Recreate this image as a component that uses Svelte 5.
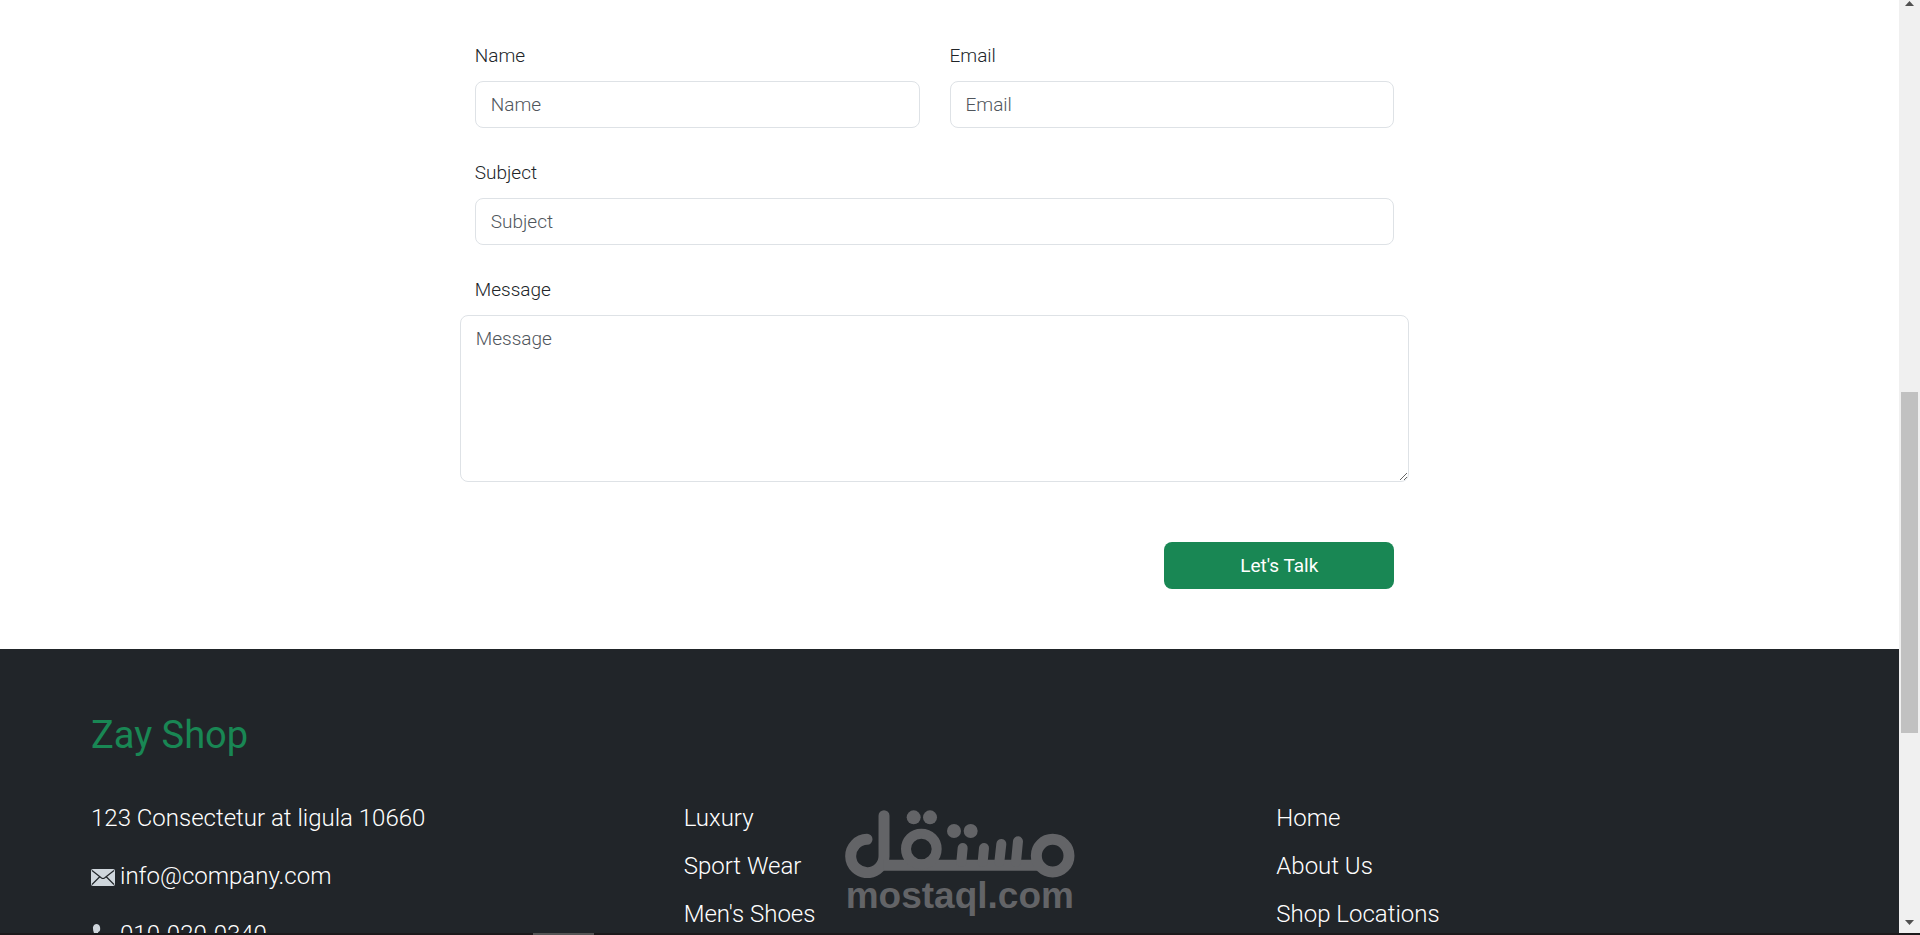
<script>
    const shopLinks = ['Luxury', 'Sport Wear', "Men's Shoes"];
    const pageLinks = ['Home', 'About Us', 'Shop Locations'];

    let form = { name: '', email: '', subject: '', message: '' };

    function handleSubmit(event) {
        event.preventDefault();
    }
</script>

<div class="window">
    <div class="viewport">
        <div class="page">
            <main>
                <form class="contact-form" on:submit={handleSubmit}>
                    <div class="pair">
                        <div class="field">
                            <label for="name">Name</label>
                            <input type="text" id="name" bind:value={form.name} placeholder="Name" />
                        </div>
                        <div class="field">
                            <label for="email">Email</label>
                            <input type="email" id="email" bind:value={form.email} placeholder="Email" />
                        </div>
                    </div>
                    <div class="field">
                        <label for="subject">Subject</label>
                        <input type="text" id="subject" bind:value={form.subject} placeholder="Subject" />
                    </div>
                    <div class="field">
                        <label for="message">Message</label>
                        <textarea id="message" bind:value={form.message} placeholder="Message"></textarea>
                    </div>
                    <button type="submit">Let's Talk</button>
                </form>
            </main>

            <footer>
                <h2>Zay Shop</h2>
                <div class="columns">
                    <ul class="contact">
                        <li>123 Consectetur at ligula 10660</li>
                        <li>
                            <svg width="24" height="24" viewBox="0 0 24 24" aria-hidden="true">
                                <rect x="0" y="5" width="24" height="17" rx="2" fill="#cfd6dc" />
                                <path d="M1 6.500 L10.500 14 Q12 15 13.500 14 L23 6.500 M1 20.500 L8.500 13 M23 20.500 L15.500 13" fill="none" stroke="#212529" stroke-width="1.200" />
                            </svg>
                            <a href="mailto:info@company.com">info@company.com</a>
                        </li>
                        <li>
                            <svg width="24" height="24" viewBox="0 0 24 24" aria-hidden="true">
                                <path d="M3 3 C5 1.500 8 1.500 9 5 C9.500 8 9 9.500 7 10 C7.500 13 10 16 13 17 C14 15 16 14.500 19 16 C21 17.500 21 19.500 19 21 C14 25 1 15 2 5 Z" fill="#cfd6dc" />
                            </svg>
                            <a href="tel:010-020-0340">010-020-0340</a>
                        </li>
                    </ul>
                    <ul class="links">
                        {#each shopLinks as link}
                            <li><a href="#shop">{link}</a></li>
                        {/each}
                    </ul>
                    <ul class="links">
                        {#each pageLinks as link}
                            <li><a href="#page">{link}</a></li>
                        {/each}
                    </ul>
                </div>
            </footer>
        </div>

        <div class="scrollbar" aria-hidden="true">
            <svg width="9" height="5" viewBox="0 0 9 5"><path d="M0 5 L4.500 0 L9 5 Z" fill="#505050" /></svg>
            <div class="track">
                <div class="before"></div>
                <div class="thumb"></div>
                <div class="after"></div>
            </div>
            <svg width="9" height="5" viewBox="0 0 9 5"><path d="M0 0 L4.500 5 L9 0 Z" fill="#505050" /></svg>
        </div>

        <div class="watermark">
            <svg viewBox="75 60 690 203" role="img" aria-label="مستقل" fill="none" stroke="#636467" stroke-width="33" stroke-linecap="round">
                <path d="M192 77 V197 A50 50 0 1 1 141 148" />
                <line x1="190" y1="226" x2="660" y2="226" stroke-linecap="butt" />
                <circle cx="304" cy="177" r="46" stroke-width="30" />
                <circle cx="698" cy="197" r="49" />
                <g stroke-width="30">
                    <line x1="428" y1="174" x2="424" y2="216" />
                    <line x1="492" y1="174" x2="488" y2="216" />
                    <line x1="544" y1="162" x2="538" y2="216" />
                    <line x1="594" y1="154" x2="588" y2="216" />
                </g>
                <g fill="#636467" stroke="none">
                    <circle cx="281" cy="82" r="21" />
                    <circle cx="330" cy="82" r="21" />
                    <circle cx="402" cy="123" r="21" />
                    <circle cx="452" cy="123" r="21" />
                </g>
            </svg>
            <span>mostaql.com</span>
        </div>
    </div>
    <div class="edge"><div class="marker"></div></div>
</div>

<style>
    :global(body) {
        margin: 0;
        font-family: Roboto, "Open Sans", sans-serif;
        font-size: 19px;
        font-weight: 300;
        line-height: 30px;
        color: #212529;
        background-color: #fff;
    }

    .window {
        display: flex;
        flex-direction: column;
        height: 100vh;
    }

    .viewport {
        position: relative;
        display: flex;
        flex: 1;
        min-height: 0;
    }

    .page {
        flex: 1;
        overflow: hidden;
    }

    .contact-form {
        display: flex;
        flex-direction: column;
        gap: 30px;
        box-sizing: border-box;
        width: 50%;
        margin-left: calc(25% - 15px);
        padding: 41px 15px 60px;
    }

    .pair {
        display: grid;
        grid-template-columns: 1fr 1fr;
        gap: 30px;
    }

    .field {
        display: flex;
        flex-direction: column;
        gap: 10px;
    }

    input,
    textarea {
        box-sizing: border-box;
        width: 100%;
        height: 47px;
        padding: 8px 15px;
        border: 1px solid #dee2e6;
        border-radius: 8px;
        background-color: #fff;
        color: #212529;
        font: inherit;
    }

    textarea {
        width: auto;
        height: 167px;
        margin: 0 -15px;
        resize: vertical;
    }

    input::placeholder,
    textarea::placeholder {
        color: #50565c;
        opacity: 1;
    }

    button {
        align-self: flex-end;
        width: 25%;
        height: 47px;
        margin-top: 30px;
        border: none;
        border-radius: 8px;
        background-color: #198754;
        color: #fff;
        font: inherit;
        font-weight: 400;
        cursor: pointer;
    }

    footer {
        padding: 62px 30px 60px 91px;
        background-color: #212529;
        color: #fff;
        font-size: 24px;
        line-height: 36px;
    }

    h2 {
        margin: 0 0 41px;
        color: #198754;
        font-size: 38px;
        font-weight: 400;
        line-height: 48px;
    }

    .columns {
        display: grid;
        grid-template-columns: repeat(3, 1fr);
    }

    ul {
        display: flex;
        flex-direction: column;
        margin: 0;
        padding: 0;
        list-style: none;
    }

    .contact {
        gap: 22px;
    }

    .contact li {
        display: flex;
        align-items: center;
        gap: 5px;
    }

    .links {
        gap: 12px;
    }

    a {
        color: inherit;
        text-decoration: none;
    }

    .scrollbar {
        display: flex;
        flex-direction: column;
        align-items: center;
        box-sizing: border-box;
        width: 21px;
        padding: 1px 2px 8px;
        background-color: #f0f0f0;
    }

    .scrollbar svg {
        display: block;
    }

    .track {
        display: flex;
        flex: 1;
        flex-direction: column;
        align-self: stretch;
    }

    .before {
        flex: 386;
    }

    .thumb {
        flex: 341;
        background-color: #c1c1c1;
    }

    .after {
        flex: 187;
    }

    .watermark {
        position: absolute;
        left: 44%;
        bottom: 19px;
        display: flex;
        flex-direction: column;
        align-items: center;
        width: 230px;
        color: #636467;
        font-family: "Liberation Sans", Arial, sans-serif;
        font-size: 37px;
        font-weight: 700;
        line-height: 36px;
        pointer-events: none;
    }

    .watermark svg {
        display: block;
        width: 230px;
    }

    .edge {
        height: 2px;
        background-color: #1c191b;
    }

    .marker {
        width: 61px;
        height: 2px;
        margin-left: calc(28% - 5px);
        background-color: #555;
    }
</style>
